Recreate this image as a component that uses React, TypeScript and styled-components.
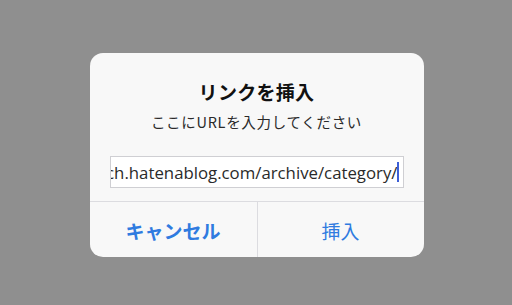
import styled, { createGlobalStyle } from "styled-components"

const GlobalStyle = createGlobalStyle`
  html, body {
    margin: 0;
    padding: 0;
    background: #8f8f8f;
  }
  body {
    font-family: "Noto Sans CJK JP", "Noto Sans", sans-serif;
  }
`

export default function App() {
  return (
    <>
      <GlobalStyle />
      <Overlay>
        <Dialog>
          <Body>
            <Title>リンクを挿入</Title>
            <Message>ここにURLを入力してください</Message>
            <Field>
              <FieldText>ch.hatenablog.com/archive/category/</FieldText>
              <Caret />
            </Field>
          </Body>
          <Actions>
            <ActionButton $bold>キャンセル</ActionButton>
            <ActionButton>挿入</ActionButton>
          </Actions>
        </Dialog>
      </Overlay>
    </>
  )
}

const Overlay = styled.div`
  width: 512px;
  height: 305px;
  display: flex;
  justify-content: center;
  padding-top: 53px;
  padding-left: 1px;
  box-sizing: border-box;
`

const Dialog = styled.div`
  width: 334px;
  height: 204px;
  background: #f8f8f8;
  border-radius: 13px;
  display: flex;
  flex-direction: column;
  overflow: hidden;
`

const Body = styled.div`
  display: flex;
  flex-direction: column;
  align-items: center;
  padding: 27px 20px 0;
  height: 149px;
  box-sizing: border-box;
  border-bottom: 1px solid #dcdce0;
`

const Title = styled.div`
  font-size: 19px;
  font-weight: 700;
  color: #111;
  line-height: 24px;
  letter-spacing: 0.3px;
`

const Message = styled.div`
  margin-top: 8px;
  font-size: 14.5px;
  color: #2a2a2a;
  line-height: 20px;
  letter-spacing: 0.7px;
`

const Field = styled.div`
  margin-top: 24px;
  width: 294px;
  height: 32px;
  box-sizing: border-box;
  background: #fff;
  border: 1px solid #cfcfd3;
  display: flex;
  align-items: center;
  justify-content: flex-end;
  overflow: hidden;
  padding-right: 4px;
`

const FieldText = styled.span`
  flex-shrink: 0;
  font-family: "Open Sans", "Noto Sans", sans-serif;
  font-size: 16.8px;
  color: #2a2a2a;
  white-space: nowrap;
`

const Caret = styled.span`
  flex-shrink: 0;
  width: 2px;
  height: 20px;
  background: #3d5fd6;
  margin-left: -1px;
`

const Actions = styled.div`
  flex: 1;
  display: grid;
  grid-template-columns: 1fr 1fr;
`

const ActionButton = styled.div<{ $bold?: boolean }>`
  display: flex;
  align-items: center;
  justify-content: center;
  font-size: 19px;
  color: #2f7be0;
  font-weight: ${p => (p.$bold ? 700 : 400)};
  padding-top: 2px;

  & + & {
    border-left: 1px solid #dcdce0;
  }
`
